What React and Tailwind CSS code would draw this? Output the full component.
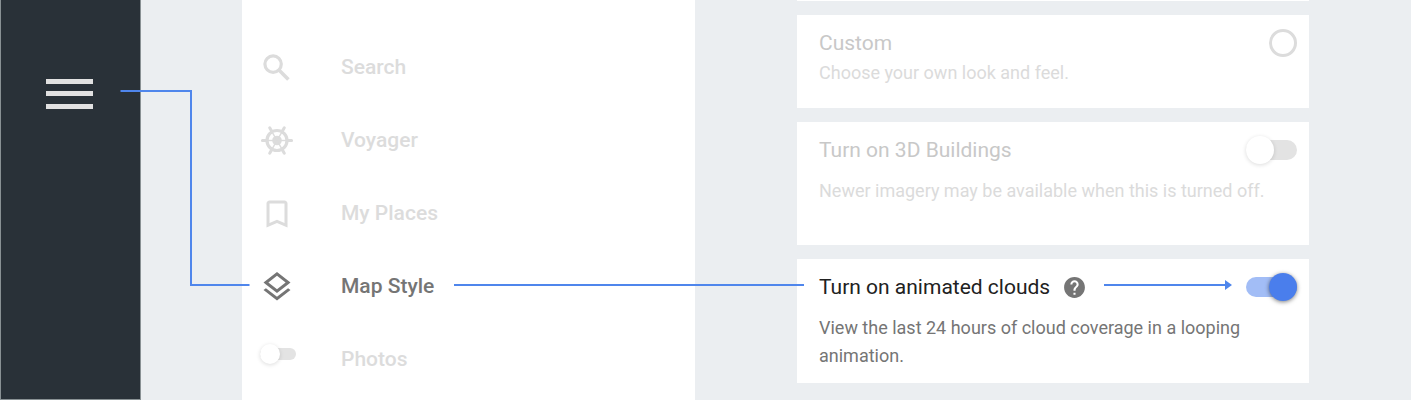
import React, { useState } from 'react';
import clsx from 'clsx';
import { MdBookmarkBorder, MdHelp, MdOutlineLayers } from 'react-icons/md';

const WheelIcon = ({ className }) => (
  <svg className={className} viewBox="0 0 36 36" fill="none" stroke="currentColor" aria-hidden="true">
    <circle cx="18" cy="17.5" r="10" strokeWidth="3.2" />
    <circle cx="18" cy="17.5" r="4.8" fill="currentColor" stroke="none" />
    {[0, 60, 120].map((angle) => (
      <g key={angle} transform={`rotate(${angle} 18 17.5)`}>
        <path d="M6 17.5h24" strokeWidth="1.4" />
        <path d="M3.4 17.5h4M28.6 17.5h4" strokeWidth="3" strokeLinecap="round" />
      </g>
    ))}
  </svg>
);

const SearchIcon = ({ className }) => (
  <svg className={className} viewBox="0 0 36 36" fill="none" stroke="currentColor" aria-hidden="true">
    <circle cx="14.1" cy="14.1" r="8.2" strokeWidth="3.2" />
    <path d="M20.2 20.2l9.2 9.2" strokeWidth="3.6" />
  </svg>
);

const Switch = ({ label, defaultChecked = false, small = false }) => {
  const [checked, setChecked] = useState(defaultChecked);

  return (
    <span
      className={clsx(
        'relative flex shrink-0 items-center',
        small ? 'h-5 w-9' : 'h-7 w-[51px]'
      )}>
      <input
        type="checkbox"
        role="switch"
        aria-label={label}
        checked={checked}
        onChange={(e) => setChecked(e.target.checked)}
        className={clsx(
          'm-0 cursor-pointer appearance-none rounded-full',
          small ? 'h-3 w-full' : 'h-5 w-full',
          checked ? 'bg-[#a2bdf6]' : 'bg-[#e3e3e3]'
        )}
      />
      <span
        className={clsx(
          'pointer-events-none absolute top-0 rounded-full',
          small ? 'size-5' : 'size-7',
          checked
            ? 'right-0 bg-[#4a7eec] shadow-[0_1px_4px_rgba(0,0,0,0.5)]'
            : 'left-0 bg-white shadow-[0_1px_4px_rgba(0,0,0,0.14)]'
        )}
      />
    </span>
  );
};

const NAV_ITEMS = [
  { name: 'Search', Icon: SearchIcon },
  { name: 'Voyager', Icon: WheelIcon },
  { name: 'My Places', Icon: MdBookmarkBorder },
  { name: 'Map Style', Icon: MdOutlineLayers, active: true }
];

const NavItem = ({ name, Icon, active }) => (
  <li className="flex h-[73px] items-center">
    <a
      href="#"
      className={clsx('flex items-center', active ? 'text-[#757575]' : 'text-[#dcdcdc]')}>
      <span className="flex h-9 w-[38px] justify-center">
        <Icon className="size-9" />
      </span>
      <span className="ml-[45px] whitespace-nowrap">{name}</span>
    </a>
    {/* leads from the active item to its card in the next column */}
    {active && <span className="z-10 mb-[3px] ml-5 -mr-[109px] h-0.5 flex-1 bg-[#4f86ec]" />}
  </li>
);

const Card = ({ title, text, active, help, control, className, textClassName }) => (
  <section className={clsx('bg-white pt-3.5 pr-3 pb-[13px] pl-[22px]', className)}>
    <div className="flex h-7 items-center">
      <h2
        className={clsx(
          'text-[21px] leading-7 whitespace-nowrap',
          active ? 'text-[#212121]' : 'text-[#c8c8c8]'
        )}>
        {title}
      </h2>
      {help && (
        <button type="button" aria-label="Help" className="ml-3 shrink-0 text-[#757575]">
          <MdHelp className="size-[25px]" />
        </button>
      )}
      {active ? (
        <span className="mr-3.5 mb-1 ml-[17px] flex flex-1 items-center text-[#4f86ec]">
          <span className="h-0.5 flex-1 bg-current" />
          <svg className="h-2.5 w-[7px]" viewBox="0 0 7 10" fill="currentColor" aria-hidden="true">
            <path d="M0 0 7 5 0 10z" />
          </svg>
        </span>
      ) : (
        <span className="flex-1" />
      )}
      {control}
    </div>
    <p
      className={clsx(
        'text-[18px] leading-7',
        active ? 'text-[#757575]' : 'text-[#dbdbdb]',
        textClassName
      )}>
      {text}
    </p>
  </section>
);

const App = () => (
  <div className="relative flex min-h-screen bg-[#ebeef1] font-['Roboto',sans-serif]">
    <aside className="flex w-[141px] shrink-0 items-start border-x border-b border-[#899194] bg-[#293138] pt-[79px] pl-[45px]">
      <button type="button" aria-label="Menu" className="text-[#e1e1e1]">
        <svg className="h-[30px] w-[47px]" viewBox="0 0 47 30" fill="currentColor" aria-hidden="true">
          <path d="M0 0h47v5H0zM0 12h47v5H0zM0 25h47v5H0z" />
        </svg>
      </button>
    </aside>

    <nav className="ml-[101px] flex-[453] basis-0 bg-white text-[21px] font-medium">
      <ul className="pt-[31px] pl-4">
        {NAV_ITEMS.map((item) => (
          <NavItem key={item.name} {...item} />
        ))}
        <li className="flex h-[73px] items-center text-[#dcdcdc]">
          <span className="flex h-8 w-[38px] items-start justify-end">
            <Switch label="Photos" small />
          </span>
          <span className="ml-[45px]">Photos</span>
        </li>
      </ul>
    </nav>

    <main className="mr-[102px] ml-[102px] flex-[512] basis-0">
      <div className="flex flex-col gap-3.5">
        <div className="h-px bg-white" />
        <Card
          className="min-h-[93px]"
          title="Custom"
          text="Choose your own look and feel."
          textClassName="mt-0.5"
          control={
            <input
              type="radio"
              name="look"
              aria-label="Custom"
              className="m-0 size-7 shrink-0 appearance-none rounded-full border-3 border-[#dcdcdc]"
            />
          }
        />
        <Card
          className="min-h-[123px]"
          title="Turn on 3D Buildings"
          text="Newer imagery may be available when this is turned off."
          textClassName="mt-[13px]"
          control={<Switch label="Turn on 3D Buildings" />}
        />
        <Card
          className="min-h-[123px]"
          title="Turn on animated clouds"
          text="View the last 24 hours of cloud coverage in a looping animation."
          textClassName="mt-[13px]"
          active
          help
          control={<Switch label="Turn on animated clouds" defaultChecked />}
        />
      </div>
    </main>

    {/* menu button to Map Style */}
    <svg
      className="pointer-events-none absolute top-[90px] left-[120px] h-[196px] w-[130px]"
      viewBox="0 0 130 196"
      fill="none"
      stroke="#4f86ec"
      strokeWidth="2"
      aria-hidden="true">
      <path d="M0.5 1H71v194h58.5" />
    </svg>
  </div>
);

export default App;
